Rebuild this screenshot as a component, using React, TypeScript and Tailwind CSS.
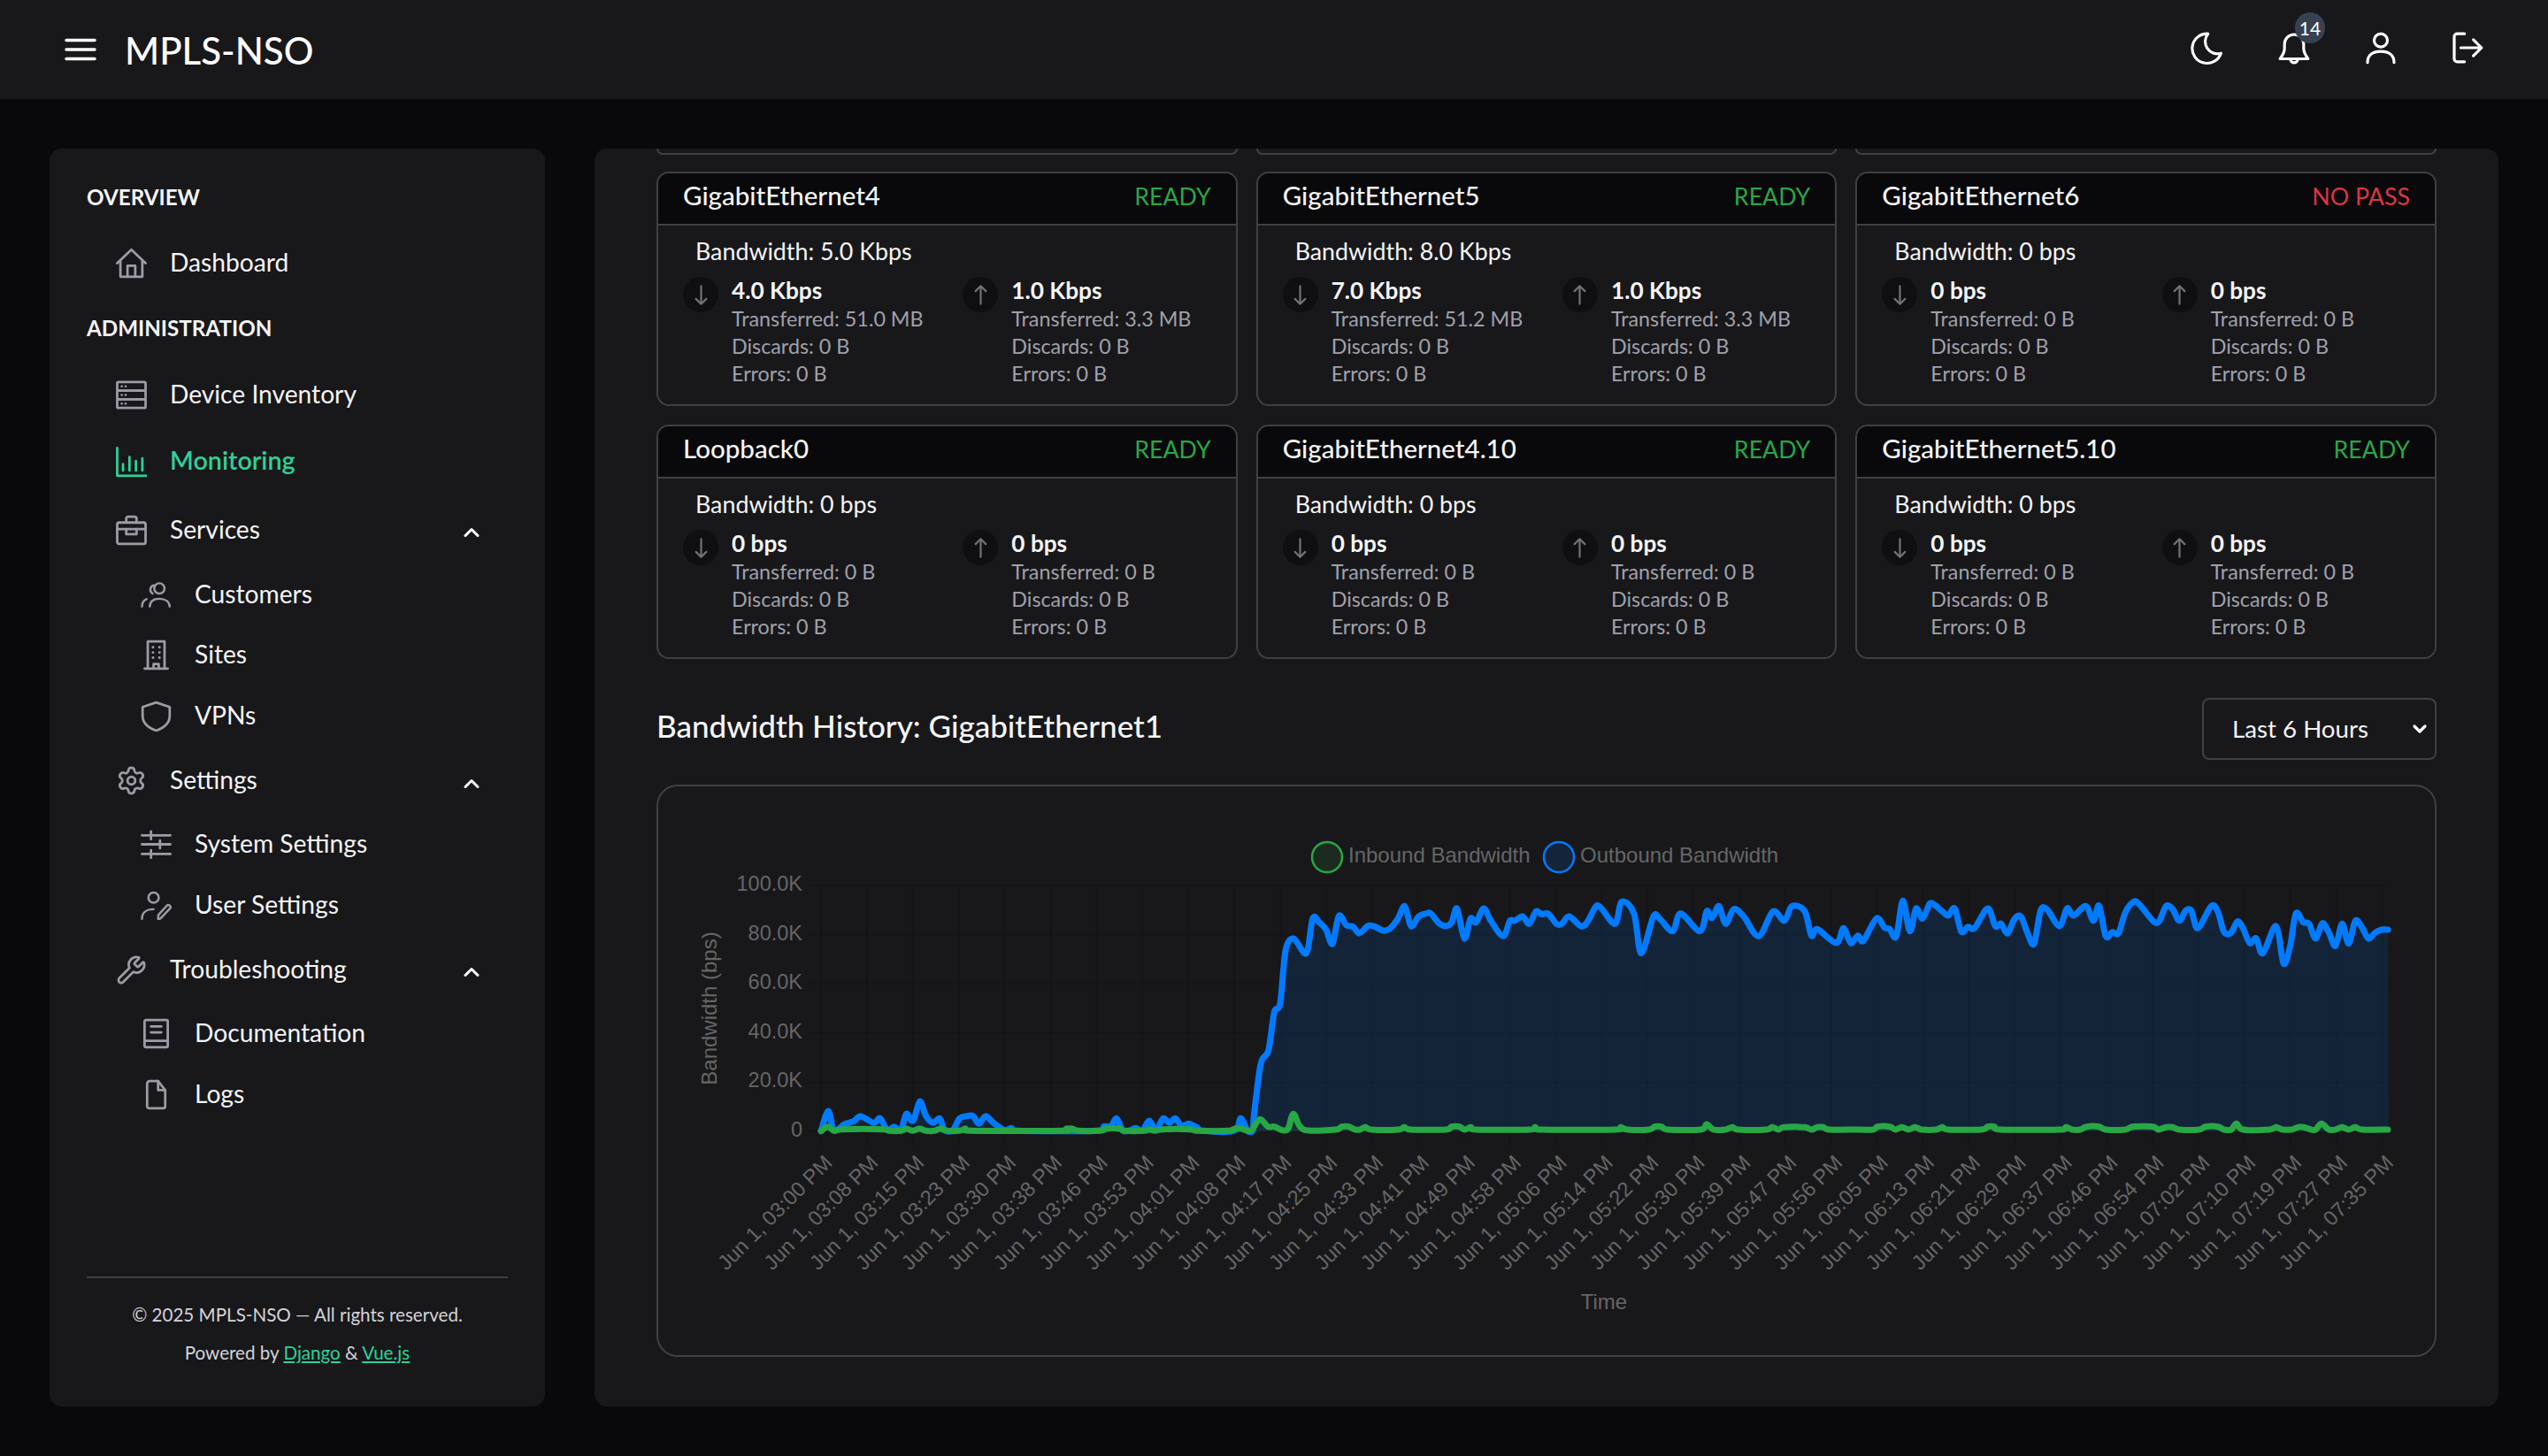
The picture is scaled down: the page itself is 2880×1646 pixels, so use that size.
import type { ReactNode } from 'react';
import { ChevronDown, ChevronUp, Settings, Wrench } from 'lucide-react';

// ---- icons drawn to match the reference ----
function Ico({ children, className = 'text-[#9c9ca6]', size = 35, sw = 1.9 }: { children: ReactNode; className?: string; size?: number; sw?: number }) {
  return (
    <svg width={size} height={size} viewBox="0 0 24 24" fill="none" stroke="currentColor" strokeWidth={sw} strokeLinecap="round" strokeLinejoin="round" className={`shrink-0 ${className}`}>
      {children}
    </svg>
  );
}

const HomeIcon = <Ico><path d="M1 12 12 1.500 23 12" /><path d="M3.500 10v12.500h17V10" /><path d="M9 22.500V14h6v8.500" /></Ico>;
const ServerIcon = (
  <Ico>
    <rect x="1" y="2" width="22" height="6.600" rx="1" />
    <rect x="1" y="8.700" width="22" height="6.600" rx="1" />
    <rect x="1" y="15.400" width="22" height="6.600" rx="1" />
    <path d="M4.500 5.300h.1M7.500 5.300h.1M4.500 12h.1M7.500 12h.1M4.500 18.700h.1M7.500 18.700h.1" strokeWidth="1.800" />
  </Ico>
);
const ChartIcon = <Ico className="text-[#2ed198]"><path d="M1 1v21.500h22.500" /><path d="M5.500 18.500v-5M10.500 18.500V8M15.500 18.500v-7.500M20.500 18.500V9" /></Ico>;
const BriefcaseIcon = (
  <Ico>
    <rect x="1" y="6" width="22" height="16.500" rx="1.500" />
    <path d="M8 6V3a1.500 1.500 0 0 1 1.500-1.500h5A1.500 1.500 0 0 1 16 3v3" />
    <path d="M1 11h22" />
    <path d="M8 11v4h8v-4" />
  </Ico>
);
const UsersIcon = (
  <Ico sw={1.7}>
    <circle cx="14.500" cy="7" r="4" />
    <path d="M7 21c.2-3.800 3-6 7.500-6s7.800 2.200 8 6" />
    <path d="M9.200 11a3.600 3.600 0 0 1 .8-6.500" />
    <path d="M1 21c0-2.800 1.300-4.800 3.600-5.700" />
  </Ico>
);
const BuildingIcon = (
  <Ico>
    <path d="M5.500 22.500V1.500h13v21" />
    <path d="M3 22.500h18" />
    <path d="M10 22.500v-3.500h4v3.500" />
    <path d="M9.500 6h.1M14.500 6h.1M9.500 10h.1M14.500 10h.1M9.500 14h.1M14.500 14h.1" strokeWidth="2" />
  </Ico>
);
const ShieldIcon = <Ico><path d="M12 1.500 22.500 5v7c0 5-3.800 8.800-10.500 11.300C5.300 20.800 1.500 17 1.500 12V5z" /></Ico>;
const SlidersIcon = (
  <Ico>
    <path d="M1 5h22M1 12h22M1 19.500h22" />
    <path d="M8 2v6M15 9v6M8 16.500v6" />
  </Ico>
);
const UserPenIcon = (
  <Ico sw={1.7}>
    <circle cx="10" cy="6" r="4" />
    <path d="M1 22.500c0-5 3.500-7.500 9-7.500" />
    <path d="M14.500 22.500l-1 0 .2-3L20 12.500a1.500 1.500 0 0 1 2.800 1.800L15.500 22z" />
  </Ico>
);
const BookIcon = (
  <Ico>
    <rect x="3" y="1.500" width="18" height="21" rx="1" />
    <path d="M8 6.500h8M8 11h8M3 17.500h18" />
  </Ico>
);
const FileIcon = <Ico><path d="M7 1.500h6.500l5.500 7V21a1.500 1.500 0 0 1-1.500 1.500h-10.500A1.500 1.500 0 0 1 5 21V3.500A2 2 0 0 1 7 1.500z" /><path d="M13.500 1.500V8.500H19" /></Ico>;

// ---- sidebar ----
function NavRow({ icon, label, height, sub, active, open }: { icon: ReactNode; label: string; height: string; sub?: boolean; active?: boolean; open?: boolean }) {
  return (
    <div className={`flex items-center ${height} ${sub ? 'pl-[61px]' : 'pl-[33px]'} gap-[26px] pr-[27px]`}>
      {icon}
      <span className={`flex-1 pb-[2px] ${active ? 'text-[28.700px] text-[#2ed198] font-semibold' : 'text-[28.200px] text-[#f4f4f5]'}`}>{label}</span>
      {open && <ChevronUp size={28} strokeWidth={2.600} className="text-white mt-[6px]" />}
    </div>
  );
}

function Sidebar() {
  return (
    <aside className="w-[560px] shrink-0 flex flex-col bg-[#18181b] rounded-[14px] px-[42px] pt-[34px] pb-[39px]">
      <h3 className="h-[42px] flex items-center text-[24.200px] font-bold text-[#f4f4f5]">OVERVIEW</h3>
      <NavRow icon={HomeIcon} label="Dashboard" height="h-[76px] mt-[15px]" />
      <h3 className="h-[42px] mt-[15px] flex items-center text-[24.200px] font-bold text-[#f4f4f5]">ADMINISTRATION</h3>
      <NavRow icon={ServerIcon} label="Device Inventory" height="h-[76px] mt-[16px]" />
      <NavRow icon={ChartIcon} label="Monitoring" height="h-[76px]" active />
      <NavRow icon={BriefcaseIcon} label="Services" height="h-[78px]" open />
      <NavRow icon={UsersIcon} label="Customers" height="h-[68px]" sub />
      <NavRow icon={BuildingIcon} label="Sites" height="h-[68px]" sub />
      <NavRow icon={ShieldIcon} label="VPNs" height="h-[70px]" sub />
      <NavRow icon={<Settings size={35} strokeWidth={1.900} className="shrink-0 text-[#9c9ca6]" />} label="Settings" height="h-[77px]" open />
      <NavRow icon={SlidersIcon} label="System Settings" height="h-[67px]" sub />
      <NavRow icon={UserPenIcon} label="User Settings" height="h-[71px]" sub />
      <NavRow icon={<Wrench size={35} strokeWidth={1.900} className="shrink-0 text-[#9c9ca6]" />} label="Troubleshooting" height="h-[74px]" open />
      <NavRow icon={BookIcon} label="Documentation" height="h-[70px]" sub />
      <NavRow icon={FileIcon} label="Logs" height="h-[68px]" sub />
      <div className="mt-auto border-t-2 border-[#3f3f46] pt-[20px] text-center text-[20.600px] leading-[43px] text-[#d4d4d8]">
        <p>© 2025 MPLS-NSO — All rights reserved.</p>
        <p>
          Powered by <a className="text-[#2ed198] underline">Django</a> & <a className="text-[#2ed198] underline">Vue.js</a>
        </p>
      </div>
    </aside>
  );
}

// ---- interface cards ----
type Side = { rate: string; moved: string };
type Iface = { name: string; state: string; bw: string; down: Side; up: Side };

const zero: Side = { rate: '0 bps', moved: '0 B' };

const interfaces: Iface[] = [
  { name: 'GigabitEthernet4', state: 'READY', bw: '5.0 Kbps', down: { rate: '4.0 Kbps', moved: '51.0 MB' }, up: { rate: '1.0 Kbps', moved: '3.3 MB' } },
  { name: 'GigabitEthernet5', state: 'READY', bw: '8.0 Kbps', down: { rate: '7.0 Kbps', moved: '51.2 MB' }, up: { rate: '1.0 Kbps', moved: '3.3 MB' } },
  { name: 'GigabitEthernet6', state: 'NO PASS', bw: '0 bps', down: zero, up: zero },
  { name: 'Loopback0', state: 'READY', bw: '0 bps', down: zero, up: zero },
  { name: 'GigabitEthernet4.10', state: 'READY', bw: '0 bps', down: zero, up: zero },
  { name: 'GigabitEthernet5.10', state: 'READY', bw: '0 bps', down: zero, up: zero },
];

function Stat({ side, dir }: { side: Side; dir: 'down' | 'up' }) {
  return (
    <div className="flex gap-[15px]">
      <div className="w-[40px] h-[40px] rounded-full bg-[#0f0f11] flex items-center justify-center shrink-0">
        <Ico className="text-[#71717a]" size={35} sw={1.500}>
          {dir === 'down' ? <path d="M12 5v14M8 15l4 4 4-4" /> : <path d="M12 19V5M8 9l4-4 4 4" />}
        </Ico>
      </div>
      <div className="whitespace-nowrap">
        <div className="h-[32px] leading-[30px] text-[26.200px] font-bold text-[#f4f4f5]">{side.rate}</div>
        <div className="text-[23.300px] leading-[31px] text-[#a1a1aa]">
          <div>Transferred: {side.moved}</div>
          <div>Discards: 0 B</div>
          <div>Errors: 0 B</div>
        </div>
      </div>
    </div>
  );
}

function Card({ item }: { item: Iface }) {
  const bad = item.state !== 'READY';
  return (
    <div className="h-[265px] rounded-[14px] border-2 border-[#3f3f46] overflow-hidden">
      <div className="h-[59px] flex items-center justify-between px-[28px] bg-[#09090b] border-b-2 border-[#3f3f46]">
        <span className="pb-[7px] text-[29.500px] font-medium text-[#f4f4f5]">{item.name}</span>
        <span className={`pb-[4px] text-[26.800px] ${bad ? 'text-[#dc3545]' : 'text-[#28a745]'}`}>{item.state}</span>
      </div>
      <div className="px-[28px] pt-[8px]">
        <div className="pl-[14px] h-[50px] leading-[42px] text-[26.800px] text-[#f4f4f5]">Bandwidth: {item.bw}</div>
        <div className="grid grid-cols-2 gap-[36px]">
          <Stat side={item.down} dir="down" />
          <Stat side={item.up} dir="up" />
        </div>
      </div>
    </div>
  );
}

// ---- chart: points traced from the reference, in page pixels ----
const fromA = (a: number[]) => pairs(a).map(([x, y]) => [730 + x / 1.96, 880 + y / 3]);
const fromB = (a: number[]) => pairs(a).map(([x, y]) => [1300 + x / 1.96, 960 + y / 3]);
const fromC = (a: number[]) => pairs(a).map(([x, y]) => [2100 + x / 2.01, 960 + y / 3]);

function pairs(a: number[]) {
  const out: number[][] = [];
  for (let i = 0; i < a.length; i += 2) out.push([a[i], a[i + 1]]);
  return out;
}

const blue = [
  ...fromA([388,1193,404,1125,417,1190,440,1170,460,1160,476,1143,505,1165,519,1150,535,1190,550,1178,565,1190,577,1135,592,1158,607,1092,620,1140,636,1165,651,1150,662,1190,680,1190,695,1150,712,1142,725,1142,738,1168,753,1142,770,1165,795,1190,810,1183,825,1192,1000,1192,1015,1177,1030,1177,1043,1150,1056,1190,1070,1192,1085,1183,1100,1192,1115,1158,1130,1190,1146,1150,1160,1165,1173,1150,1187,1175,1203,1168,1220,1180,1235,1192,1303,1192,1318,1150,1333,1192,1345,1190]),
  ...fromB([230,900,245,725,262,680,275,550,288,520,300,340,318,300,346,350,360,232,375,245,390,270,404,318,418,223,435,255,450,260,463,282,482,258,495,258,515,272,530,268,548,235,564,190,578,258,595,225,612,215,622,215,640,248,655,258,668,245,680,198,696,300,710,232,722,245,739,198,755,240,782,292,797,240,808,240,825,225,840,250,855,208,868,218,882,216,900,250,912,250,928,225,955,258,970,240,988,190,1000,198,1030,250,1045,175,1072,215,1088,350,1115,225,1130,235,1158,275,1175,215,1218,275,1233,207,1245,230,1260,190,1275,250,1293,200,1315,225,1348,292,1380,208,1405,240,1422,190,1450,207,1465,290,1478,268,1520,315,1536,265,1552,315]),
  ...fromC([0,290,12,308,42,232,60,262,72,268,87,293,102,172,118,275,132,198,147,232,163,182,175,187,192,208,205,222,220,198,235,277,250,260,265,265,295,198,312,258,325,250,340,283,355,235,370,225,385,280,400,318,415,205,430,202,458,258,475,198,490,222,518,190,535,240,548,188,563,292,578,278,592,282,608,210,627,175,640,185,672,242,685,240,700,190,715,200,730,240,745,205,758,207,772,265,803,190,818,210,832,278,848,280,862,242,875,265,890,315,905,300,920,350,950,258,967,385,982,325,995,215,1012,245,1025,250,1040,300,1055,248,1070,280,1085,325,1100,250,1115,317,1130,240,1145,262,1160,300,1175,280,1190,270,1204,270]),
];

const green = [
  ...fromA([388,1193,403,1178,417,1192,435,1187,525,1187,540,1192,565,1192,578,1185,590,1192,607,1185,620,1192,640,1192,652,1185,668,1192,695,1192,708,1185,722,1192,920,1192,932,1185,945,1185,958,1192,1005,1192,1020,1185,1050,1185,1060,1192,1105,1192,1115,1187,1128,1192,1145,1187,1205,1187,1220,1192,1290,1192,1305,1185,1320,1185,1340,1192,1360,1153,1378,1178,1392,1178,1410,1190,1423,1185,1435,1135]),
  ...fromB([340,948,410,948,425,938,440,938,455,948,465,948,477,940,490,948,550,948,563,940,578,948,655,948,668,938,685,938,697,948,710,940,722,948,840,948,853,940,867,948,1030,948,1043,940,1057,948,1105,948,1118,938,1133,938,1147,948,1220,948,1233,930,1248,948,1275,948,1290,940,1303,948,1365,948,1378,940,1392,948,1405,940,1450,940,1465,948,1478,940,1492,940,1505,948]),
  ...fromC([0,948,35,948,45,938,72,938,85,948,100,940,115,948,130,940,145,948,178,948,192,940,205,948,280,948,295,938,310,938,325,948,458,948,473,940,487,948,505,948,520,938,548,938,563,948,608,948,625,938,670,938,683,948,700,940,715,940,730,948,775,948,790,938,818,938,832,948,848,948,860,928,875,948,935,948,950,940,965,948,985,948,1000,940,1012,940,1030,948,1040,948,1053,928,1070,948,1085,948,1100,940,1115,948,1130,940,1145,948,1204,948]),
];

// smoothed line, same idea as the chart library's bezier tension
function smooth(pts: number[][], t = 0.16) {
  let d = `M${pts[0][0].toFixed(1)} ${pts[0][1].toFixed(1)}`;
  for (let i = 0; i < pts.length - 1; i++) {
    const p0 = pts[i - 1] ?? pts[i];
    const p1 = pts[i];
    const p2 = pts[i + 1];
    const p3 = pts[i + 2] ?? p2;
    const c1x = p1[0] + (p2[0] - p0[0]) * t;
    const c1y = p1[1] + (p2[1] - p0[1]) * t;
    const c2x = p2[0] - (p3[0] - p1[0]) * t;
    const c2y = p2[1] - (p3[1] - p1[1]) * t;
    d += `C${c1x.toFixed(1)} ${c1y.toFixed(1)} ${c2x.toFixed(1)} ${c2y.toFixed(1)} ${p2[0].toFixed(1)} ${p2[1].toFixed(1)}`;
  }
  return d;
}

const times = ['03:00','03:08','03:15','03:23','03:30','03:38','03:46','03:53','04:01','04:08','04:17','04:25','04:33','04:41','04:49','04:58','05:06','05:14','05:22','05:30','05:39','05:47','05:56','06:05','06:13','06:21','06:29','06:37','06:46','06:54','07:02','07:10','07:19','07:27','07:35'];
const yTicks = ['100.0K', '80.0K', '60.0K', '40.0K', '20.0K', '0'];

const X0 = 928;
const X1 = 2699.5;
const YTOP = 1000;
const YBASE = 1278;
const stepX = 51.9; // labels stop a little short of the last data point
const stepY = (YBASE - YTOP) / 5;

function Chart() {
  const blueLine = smooth(blue);
  const greenLine = smooth(green);
  return (
    <div className="h-[647px] rounded-[24px] border-2 border-[#3f3f46]">
      <svg width="2008" height="643" viewBox="744 888 2008 643" className="block" fontFamily="'Liberation Sans', Arial, sans-serif">
        {/* grid */}
        {times.map((_, i) => (
          <line key={i} x1={X0 + i * stepX} x2={X0 + i * stepX} y1={YTOP} y2={YBASE + 16} stroke="#000" strokeOpacity="0.1" strokeWidth="2" />
        ))}
        {yTicks.map((_, i) => (
          <line key={i} x1={X0 - 14} x2={X1} y1={YTOP + i * stepY} y2={YTOP + i * stepY} stroke="#000" strokeOpacity="0.1" strokeWidth="2" />
        ))}

        {/* legend */}
        <circle cx="1500" cy="968" r="17" fill="#1c2b20" stroke="#28a745" strokeWidth="2.500" />
        <text x="1524" y="974" fontSize="24" fill="#666">Inbound Bandwidth</text>
        <circle cx="1762" cy="968" r="17" fill="#14243a" stroke="#007bff" strokeWidth="2.500" />
        <text x="1786" y="974" fontSize="24" fill="#666">Outbound Bandwidth</text>

        {/* axes */}
        {yTicks.map((t, i) => (
          <text key={t} x="907" y={YTOP + i * stepY + 6} textAnchor="end" fontSize="23.500" fill="#666">{t}</text>
        ))}
        <text transform="translate(810 1139) rotate(-90)" textAnchor="middle" fontSize="24" fill="#666">Bandwidth (bps)</text>
        <text x="1813" y="1479" textAnchor="middle" fontSize="24" fill="#666">Time</text>
        {times.map((t, i) => (
          <text key={t} transform={`translate(${X0 + i * stepX + 14} 1315) rotate(-45)`} textAnchor="end" fontSize="23.500" fill="#666">{`Jun 1, ${t} PM`}</text>
        ))}

        {/* series */}
        <path d={`${blueLine}L${X1} ${YBASE}L${X0} ${YBASE}Z`} fill="#007bff" fillOpacity="0.13" />
        <path d={`${greenLine}L${X1} ${YBASE}L${X0} ${YBASE}Z`} fill="#28a745" fillOpacity="0.1" />
        <path d={blueLine} fill="none" stroke="#007bff" strokeWidth="7" strokeLinejoin="round" strokeLinecap="round" />
        <path d={greenLine} fill="none" stroke="#28a745" strokeWidth="7" strokeLinejoin="round" strokeLinecap="round" />
      </svg>
    </div>
  );
}

export default function App() {
  return (
    <div className="h-[1646px] flex flex-col bg-[#09090b] font-['Lato','Noto_Sans',sans-serif] overflow-hidden">
      <header className="h-[112px] shrink-0 flex items-center bg-[#18181b] pl-[73px] pr-[71px]">
        <svg width="36" height="28" viewBox="0 0 36 28" stroke="#fff" strokeWidth="3.500" strokeLinecap="round" className="shrink-0">
          <path d="M2 3.500h32M2 14h32M2 24.500h32" />
        </svg>
        <span className="ml-[32px] pt-[2px] text-[42px] font-medium text-white">MPLS-NSO</span>
        <div className="ml-auto -mt-[4px] flex items-center gap-[58px] text-white">
          <Ico className="text-white" size={40} sw={1.900}><path d="M12 2.500c.1 0 .3 0 .4 0a8.300 8.300 0 0 0 8.800 13.200A10 10 0 1 1 12 2.500z" /></Ico>
          <div className="relative">
            <Ico className="text-white" size={40} sw={1.900}>
              <path d="M12 3a6.500 6.500 0 0 0-6.500 6.500v3c0 3-1.500 5-3 7h19c-1.500-2-3-4-3-7v-3A6.500 6.500 0 0 0 12 3z" />
              <path d="M9.500 19.500c0 3.500 5 3.500 5 0" />
            </Ico>
            <span className="absolute -top-[20px] left-[21px] w-[34px] h-[35px] rounded-full bg-[#374151] flex items-center justify-center text-[21px] text-white">14</span>
          </div>
          <Ico className="text-white" size={40} sw={1.900}><circle cx="12" cy="7" r="4.500" /><path d="M3 22c0-5 3.500-7.500 9-7.500s9 2.500 9 7.500" /></Ico>
          <Ico className="text-white" size={40} sw={1.900}>
            <path d="M10 2.500H5a2 2 0 0 0-2 2v15a2 2 0 0 0 2 2h5" />
            <path d="M7.500 12h14M16 6.500l5.500 5.500-5.500 5.500" />
          </Ico>
        </div>
      </header>

      <div className="flex-1 flex gap-[56px] p-[56px] min-h-0">
        <Sidebar />
        <main className="flex-1 rounded-[14px] bg-[#18181b] overflow-hidden px-[70px]">
          {/* bottom edge of the row scrolled out of view */}
          <div className="grid grid-cols-3 gap-[21px] mb-[19px]">
            <div className="h-[7px] rounded-b-[14px] border-2 border-t-0 border-[#3f3f46]" />
            <div className="h-[7px] rounded-b-[14px] border-2 border-t-0 border-[#3f3f46]" />
            <div className="h-[7px] rounded-b-[14px] border-2 border-t-0 border-[#3f3f46]" />
          </div>
          <div className="grid grid-cols-3 gap-[21px]">
            {interfaces.map((item) => (
              <Card key={item.name} item={item} />
            ))}
          </div>
          <div className="mt-[44px] mb-[28px] flex items-center justify-between">
            <h2 className="pb-[7px] text-[35px] font-medium text-[#f4f4f5]">Bandwidth History: GigabitEthernet1</h2>
            <div className="relative">
              <select className="block appearance-none w-[265px] h-[70px] pl-[32px] pr-[8px] rounded-[8px] border-2 border-[#3f3f46] bg-[#18181b] text-[27.700px] text-[#f4f4f5]">
                <option>Last 6 Hours</option>
              </select>
              <ChevronDown size={24} strokeWidth={3.200} className="absolute right-[7px] top-[23px] text-white pointer-events-none" />
            </div>
          </div>
          <Chart />
        </main>
      </div>
    </div>
  );
}
